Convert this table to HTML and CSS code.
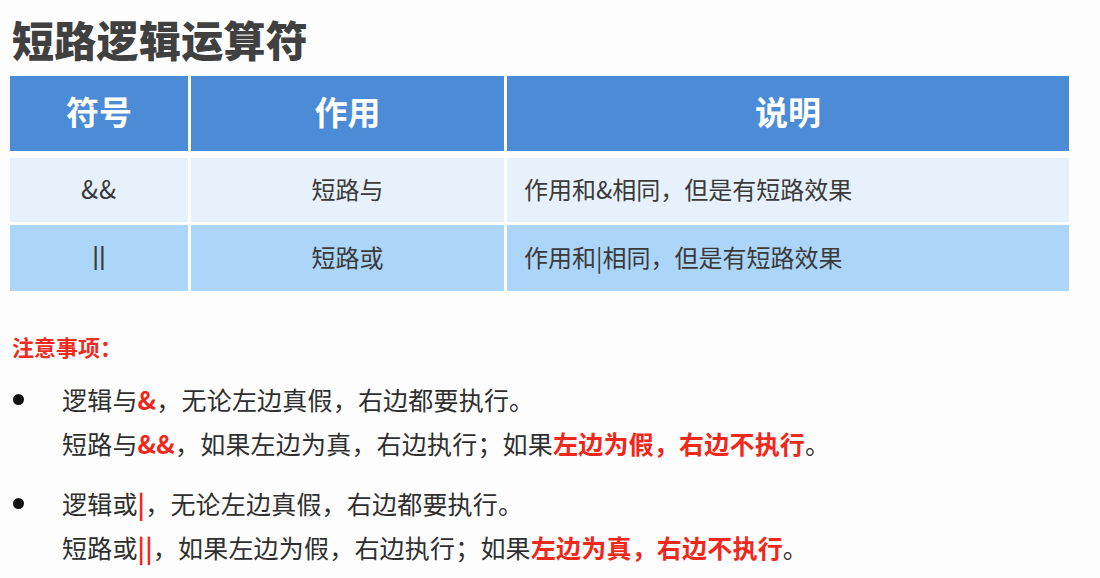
FILE: index.html
```html
<!DOCTYPE html>
<html lang="zh-CN">
<head>
<meta charset="utf-8">
<title>短路逻辑运算符</title>
<link rel="stylesheet" href="styles.css">
</head>
<body>
<div class="page">
  <h1 class="title">短路逻辑运算符</h1>
  <div class="table">
    <div class="row head">
      <div class="cell c1">符号</div>
      <div class="cell c2">作用</div>
      <div class="cell c3">说明</div>
    </div>
    <div class="row odd">
      <div class="cell c1 amp">&amp;&amp;</div>
      <div class="cell c2">短路与</div>
      <div class="cell c3 left">作用和&amp;相同，但是有短路效果</div>
    </div>
    <div class="row even">
      <div class="cell c1 bars">||</div>
      <div class="cell c2">短路或</div>
      <div class="cell c3 left">作用和|相同，但是有短路效果</div>
    </div>
  </div>
  <div class="notes-title">注意事项：</div>
  <ul class="notes">
    <li class="note">
      <span class="dot"></span>
      <div class="lines">
        <div class="line">逻辑与<b class="red">&amp;</b>，无论左边真假，右边都要执行。</div>
        <div class="line">短路与<b class="red">&amp;&amp;</b>，如果左边为真，右边执行；如果<b class="red">左边为假，右边不执行</b>。</div>
      </div>
    </li>
    <li class="note">
      <span class="dot"></span>
      <div class="lines">
        <div class="line">逻辑或<b class="red">|</b>，无论左边真假，右边都要执行。</div>
        <div class="line">短路或<b class="red">||</b>，如果左边为假，右边执行；如果<b class="red">左边为真，右边不执行</b>。</div>
      </div>
    </li>
  </ul>
</div>
</body>
</html>
```
FILE: styles.css
```css
html, body {
  margin: 0;
  padding: 0;
  background: #fdfdfd;
}
body {
  font-family: "Noto Sans CJK SC", "Noto Sans", sans-serif;
  color: #333;
}
.page {
  padding: 14px 31px 0 10px;
}
.title {
  margin: 0 0 12px 2px;
  font-size: 42px;
  line-height: 50px;
  font-weight: 900;
  color: #404040;
  letter-spacing: 0.3px;
}
.table {
  display: flex;
  flex-direction: column;
  gap: 3px;
}
.row {
  display: grid;
  grid-template-columns: 178px 313px 1fr;
  column-gap: 3px;
}
.cell {
  display: flex;
  align-items: center;
  justify-content: center;
  font-size: 24px;
  color: #3a3a3a;
  padding-bottom: 4px;
  box-sizing: border-box;
}
.cell.left {
  justify-content: flex-start;
  padding-left: 17px;
}
.head {
  height: 75px;
  margin-bottom: 4px;
}
.head .cell {
  background: #4c8bd5;
  color: #fff;
  font-size: 33px;
  font-weight: 700;
  padding-bottom: 6px;
}
.odd { height: 64px; }
.odd .cell { background: #e6f1fb; }
.even { height: 66px; }
.even .cell { background: #acd5fa; }
.amp {
  font-size: 25px;
  letter-spacing: 1px;
}
.bars {
  font-family: "Liberation Sans", "Noto Sans", sans-serif;
  font-size: 26px;
}
.notes-title {
  margin: 40px 0 0 2px;
  font-size: 22px;
  line-height: 30px;
  font-weight: 700;
  color: #ef2b1f;
}
.notes {
  list-style: none;
  margin: 16px 0 0 0;
  padding: 0;
  display: flex;
  flex-direction: column;
  gap: 16px;
}
.note {
  display: flex;
  align-items: flex-start;
}
.dot {
  flex: none;
  width: 11px;
  height: 11px;
  border-radius: 50%;
  background: #111;
  margin: 17px 0 0 3px;
}
.lines {
  margin-left: 38px;
}
.line {
  font-size: 25px;
  line-height: 44px;
  color: #2f2f2f;
  white-space: nowrap;
  letter-spacing: 0.2px;
}
.red {
  color: #f0281c;
  font-weight: 700;
}
```
